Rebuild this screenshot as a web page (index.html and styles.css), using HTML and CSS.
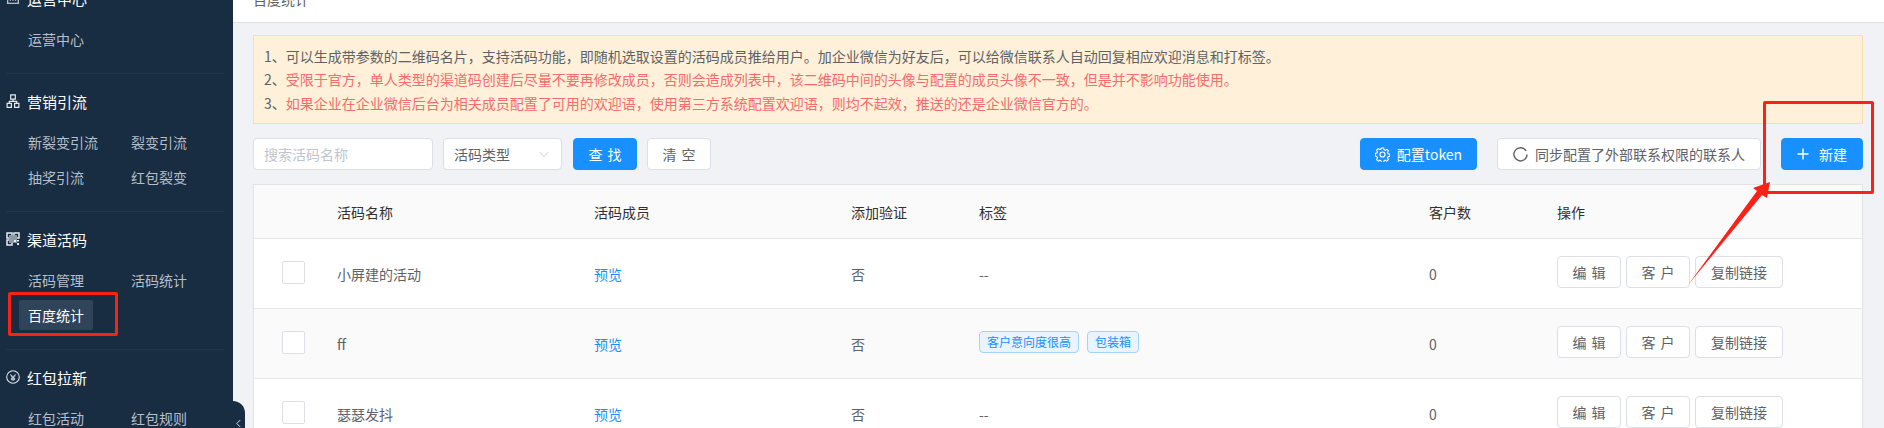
FILE: index.html
```html
<!DOCTYPE html>
<html lang="zh-CN">
<head>
<meta charset="utf-8">
<title>百度统计</title>
<link rel="stylesheet" href="styles.css">
</head>
<body>
<div class="app">
  <aside class="sidebar">
    <section class="group group-first">
      <h3 class="group-title"><svg class="gicon" viewBox="0 0 16 16"><path d="M2 14V4h12v10M1 14h14M5 7v4M8 7v4M11 7v4" fill="none" stroke="currentColor" stroke-width="1.2"/></svg>运营中心</h3>
      <div class="items"><a class="item">运营中心</a></div>
    </section>
    <section class="group">
      <h3 class="group-title"><svg class="gicon" viewBox="0 0 14 15"><path d="M4.500 1h5v4.500h-5zM.7 10h4.600v4.300H.7zM8.700 10h4.600v4.300H8.700zM7 5.500v2.300M3 10V7.800h8V10" fill="none" stroke="currentColor" stroke-width="1.300"/></svg>营销引流</h3>
      <div class="items"><a class="item">新裂变引流</a><a class="item">裂变引流</a><a class="item">抽奖引流</a><a class="item">红包裂变</a></div>
    </section>
    <section class="group">
      <h3 class="group-title"><svg class="gicon" viewBox="0 0 14 14"><path d="M1 1h5v5H1zM8 1h5v5H8zM1 8h5v5H1z" fill="none" stroke="#e8ebef" stroke-width="1.500"/><path d="M3 3h8v8H3z" fill="#8e99a6"/><path d="M8 8h2v2H8zM11 11h2v2h-2zM11 8h2v1.500h-2z" fill="#e8ebef"/></svg>渠道活码</h3>
      <div class="items"><a class="item">活码管理</a><a class="item">活码统计</a><a class="item active">百度统计</a></div>
    </section>
    <section class="group">
      <h3 class="group-title"><svg class="gicon coin" viewBox="0 0 16 16"><circle cx="8" cy="8" r="7.200" fill="none" stroke="currentColor" stroke-width="1.200"/><path d="M5 4.200 8 7l3-2.800v2.300L9.500 8.200c.8.700 1.100 1.500 1.100 2.200 0 1.200-1.100 1.900-2.600 1.900s-2.600-.7-2.600-1.900c0-.7.300-1.500 1.100-2.200L5 6.500z" fill="#aeb7c2"/></svg>红包拉新</h3>
      <div class="items"><a class="item">红包活动</a><a class="item">红包规则</a></div>
    </section>
  </aside>
  <button class="collapse" aria-label="收起"><svg viewBox="0 0 8 10" class="collapse-icon"><path d="M6 1 2 5l4 4" fill="none" stroke="currentColor" stroke-width="1.100"/></svg></button>

  <main class="main">
    <header class="topbar"><span class="crumb">百度统计</span></header>
    <div class="content">
      <div class="alert">
        <p>1、可以生成带参数的二维码名片，支持活码功能，即随机选取设置的活码成员推给用户。加企业微信为好友后，可以给微信联系人自动回复相应欢迎消息和打标签。</p>
        <p>2、<span class="warn">受限于官方，单人类型的渠道码创建后尽量不要再修改成员，否则会造成列表中，该二维码中间的头像与配置的成员头像不一致，但是并不影响功能使用。</span></p>
        <p>3、<span class="warn">如果企业在企业微信后台为相关成员配置了可用的欢迎语，使用第三方系统配置欢迎语，则均不起效，推送的还是企业微信官方的。</span></p>
      </div>

      <div class="toolbar">
        <div class="search">搜索活码名称</div>
        <div class="select"><span>活码类型</span><svg class="chev" viewBox="0 0 12 8"><path d="M1 1l5 5.500L11 1" fill="none" stroke="currentColor" stroke-width="1"/></svg></div>
        <button class="btn primary find spaced">查 找</button>
        <button class="btn clear spaced">清 空</button>
        <div class="spacer"></div>
        <button class="btn primary token"><svg class="bicon gear" viewBox="0 0 16 16"><path d="M6.800 1h2.400l.4 1.900 1.300.6 1.700-1 1.700 1.700-1 1.700.6 1.300 1.900.4v2.400l-1.900.4-.6 1.300 1 1.700-1.700 1.700-1.700-1-1.300.6-.4 1.900H6.800l-.4-1.900-1.300-.6-1.700 1-1.700-1.700 1-1.700-.6-1.300L.2 9.200V6.800l1.900-.4.6-1.300-1-1.700 1.700-1.700 1.700 1 1.300-.6z" fill="none" stroke="currentColor" stroke-width="1.200"/><circle cx="8" cy="8" r="2.700" fill="none" stroke="currentColor" stroke-width="1.200"/></svg>配置token</button>
        <button class="btn sync"><svg class="bicon refresh" viewBox="0 0 16 16"><path d="M14 4.200A7 7 0 1 0 15 8" fill="none" stroke="currentColor" stroke-width="1.500"/></svg>同步配置了外部联系权限的联系人</button>
        <button class="btn primary create"><svg class="bicon plus" viewBox="0 0 12 12"><path d="M6 .5v11M.5 6h11" stroke="currentColor" stroke-width="1.400"/></svg>新建</button>
      </div>

      <div class="table">
        <div class="row head">
          <div></div><div>活码名称</div><div>活码成员</div><div>添加验证</div><div>标签</div><div>客户数</div><div>操作</div>
        </div>
        <div class="row">
          <div class="cb-cell"><span class="checkbox"></span></div><div>小屏建的活动</div><div><a class="link">预览</a></div><div>否</div><div>--</div><div>0</div>
          <div class="ops"><button class="btn op spaced">编 辑</button><button class="btn op spaced">客 户</button><button class="btn op wide">复制链接</button></div>
        </div>
        <div class="row alt">
          <div class="cb-cell"><span class="checkbox"></span></div><div>ff</div><div><a class="link">预览</a></div><div>否</div>
          <div class="tags"><span class="tag">客户意向度很高</span><span class="tag">包装箱</span></div><div>0</div>
          <div class="ops"><button class="btn op spaced">编 辑</button><button class="btn op spaced">客 户</button><button class="btn op wide">复制链接</button></div>
        </div>
        <div class="row">
          <div class="cb-cell"><span class="checkbox"></span></div><div>瑟瑟发抖</div><div><a class="link">预览</a></div><div>否</div><div>--</div><div>0</div>
          <div class="ops"><button class="btn op spaced">编 辑</button><button class="btn op spaced">客 户</button><button class="btn op wide">复制链接</button></div>
        </div>
      </div>
    </div>
  </main>
</div>

<div class="mark mark-menu"></div>
<div class="mark mark-new"></div>
<svg class="arrow" viewBox="0 0 1884 428"><polygon points="1770,182 1753,188 1757,191 1688,285 1762,195 1767,198" fill="#fb2018"/></svg>
</body>
</html>
```
FILE: styles.css
```css
* { box-sizing: border-box; }
html, body { margin: 0; height: 428px; overflow: hidden; }
body {
  font-family: "Noto Sans CJK SC", "Liberation Sans", sans-serif;
  font-size: 14px;
  color: #606266;
  background: #f0f2f5;
  position: relative;
}
p, h3 { margin: 0; }
button { font: inherit; cursor: pointer; }

.app { display: flex; height: 428px; overflow: hidden; }

/* sidebar */
.sidebar {
  width: 233px;
  flex: none;
  height: 428px;
  overflow: hidden;
  background: #182c42;
  padding: 0 9px 0 6px;
}
.group { padding: 15px 0 19px; border-bottom: 1px solid #1f3650; }
.group:last-child { border-bottom: 0; }
.group-first { margin-top: -29px; }
.group-title {
  display: flex;
  align-items: center;
  height: 24px;
  font-size: 15px;
  font-weight: 400;
  color: #fff;
  gap: 7px;
}
.gicon { width: 14px; height: 14px; color: #e3e7ec; flex: none; }
.items {
  display: grid;
  grid-template-columns: 103px 1fr;
  grid-auto-rows: 30px;
  row-gap: 5px;
  margin-top: 14px;
  margin-left: 13px;
}
.item {
  display: flex;
  align-items: center;
  justify-self: start;
  padding: 0 9px;
  color: #b6bfc9;
  white-space: nowrap;
}
.item.active { background: #2f4459; color: #fff; border-radius: 2px; }

.collapse {
  position: absolute;
  left: 233px;
  top: 401px;
  width: 12px;
  height: 27px;
  padding: 0;
  border: 0;
  background: #182c42;
  border-radius: 0 12px 0 0;
  color: #dfe3e8;
}
.collapse-icon { position: absolute; left: 2px; top: 18px; width: 7px; height: 9px; }

/* main */
.main { flex: 1; min-width: 0; display: flex; flex-direction: column; }
.topbar {
  height: 23px;
  flex: none;
  background: #fff;
  border-bottom: 1px solid #dcdfe6;
  padding-left: 20px;
  overflow: hidden;
}
.crumb { display: block; margin-top: -11px; line-height: 20px; color: #606266; }
.content { padding: 12px 21px 0 20px; }

.alert {
  height: 89px;
  padding: 9px 12px 0 10px;
  background: #fef0d9;
  border: 1px solid #fbdfa9;
  line-height: 23.3px;
  color: #606266;
}
.warn { color: #f56c6c; }

.toolbar { display: flex; align-items: center; height: 32px; margin-top: 14px; }
.spacer { flex: 1; }
.search, .select {
  height: 32px;
  background: #fff;
  border: 1px solid #dcdfe6;
  border-radius: 4px;
  display: flex;
  align-items: center;
  padding: 0 10px;
}
.search { width: 180px; color: #c0c4cc; margin-right: 10px; }
.select { width: 119px; margin-right: 11px; justify-content: space-between; }
.chev { width: 10px; height: 7px; color: #c0c4cc; margin-right: 2px; }

.btn {
  height: 32px;
  padding: 0;
  border: 1px solid #dcdfe6;
  border-radius: 4px;
  background: #fff;
  color: #606266;
  display: inline-flex;
  align-items: center;
  justify-content: center;
  white-space: nowrap;
}
.spaced { word-spacing: 2px; }
.primary { background: #1890ff; border-color: #1890ff; color: #fff; }
.bicon { width: 14px; height: 14px; margin-right: 8px; flex: none; }
.gear { width: 15px; height: 15px; margin-right: 7px; }
.refresh { width: 15px; height: 15px; margin-right: 7px; }
.plus { width: 12px; height: 12px; margin-right: 10px; }
.find { width: 64px; margin-right: 10px; }
.clear { width: 64px; }
.token { width: 117px; margin-right: 20px; }
.sync { width: 264px; margin-right: 20px; }
.create { width: 82px; }

/* table */
.table {
  margin-top: 14px;
  background: #fff;
  border: 1px solid #e2e3e6;
  border-bottom: 0;
}
.row {
  display: grid;
  grid-template-columns: 83px 257px 257px 128px 450px 128px 1fr;
  align-items: center;
  height: 70px;
  border-bottom: 1px solid #e6e7e9;
}
.row.head { height: 54px; background: #fafafa; color: #303133; }
.row.alt { background: #fafafa; }
.cb-cell { display: flex; padding-left: 28px; }
.checkbox {
  width: 23px;
  height: 23px;
  background: #fff;
  border: 1px solid #dcdfe6;
  border-radius: 2px;
  margin-top: -3px;
}
.link { color: #1890ff; }
.tags { display: flex; gap: 8px; margin-top: -4px; }
.tag {
  height: 22px;
  line-height: 20px;
  padding: 0 7px;
  font-size: 12px;
  color: #1890ff;
  background: #e8f4ff;
  border: 1px solid #a3d3ff;
  border-radius: 4px;
}
.ops { display: flex; gap: 5px; margin-top: -3px; }
.op { width: 64px; }
.op.wide { width: 88px; }

/* annotations */
.mark { position: absolute; border: 3px solid #fb2018; border-radius: 2px; pointer-events: none; }
.mark-menu { left: 8px; top: 292px; width: 110px; height: 44px; }
.mark-new { left: 1763px; top: 101px; width: 111px; height: 93px; }
.arrow { position: absolute; left: 0; top: 0; width: 1884px; height: 428px; pointer-events: none; }
```
